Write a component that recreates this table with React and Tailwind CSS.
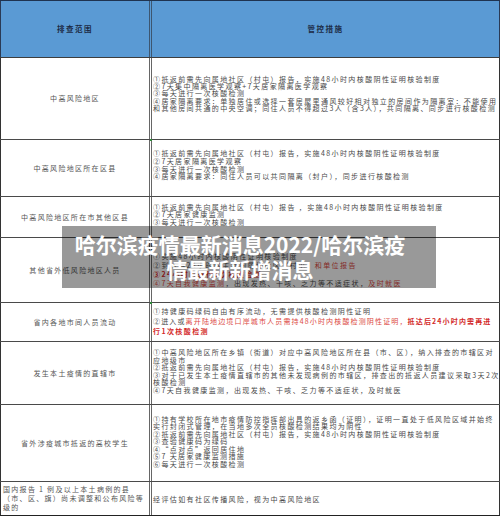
import React from "react";

const R = ({ children, b }) => (
  <span className={b ? "text-[#d32a2a] font-bold" : "text-[#dc4a44]"}>{children}</span>
);

function Row({ h, left, lines, lh = "leading-[7.4px]", pad = "", last = false, leftAlign = false, leftLh = "leading-[8.7px]" }) {
  return (
    <div className={`flex ${h} ${last ? "border-b border-[#222]" : "border-b border-[#4a4a4a]"}`}>
      <div
        className={`w-[152px] shrink-0 flex items-center border-l border-r-[3px] border-r-[#666] border-double border-l-[#333] ${
          leftAlign ? `justify-start pl-[2px] ${leftLh}` : "justify-center"
        } text-[7px] tracking-[1.3px] text-[#555]`}
      >
        <div className={leftAlign ? "" : "text-center whitespace-nowrap"}>{left}</div>
      </div>
      <div className={`flex-1 flex items-center border-r border-[#333] pl-[1px] overflow-hidden ${pad}`}>
        <div className={`text-[7px] tracking-[1.4px] text-[#4a4a4a] ${lh}`}>
          {lines.map((l, i) => (
            <div key={i} className="whitespace-nowrap">
              {l}
            </div>
          ))}
        </div>
      </div>
    </div>
  );
}

export default function App() {
  return (
    <div className="relative w-[500px] h-[516px] bg-white overflow-hidden font-['Noto_Sans_CJK_SC',sans-serif]">
      {/* header */}
      <div className="flex h-[58px] border-t border-[#1f3350] border-b border-b-[#3d3d3d] bg-[#5a9ad4]">
        <div className="w-[152px] shrink-0 flex items-center justify-center border-l border-l-[#2a3a55] border-r-[3px] border-double border-r-[#3d5670] text-[7.5px] tracking-[1.5px] font-bold text-[#1c2a44]">
          排查范围
        </div>
        <div className="flex-1 flex items-center justify-center border-r border-[#2a3a55] text-[7.5px] tracking-[1.5px] font-bold text-[#1c2a44]">
          管控措施
        </div>
      </div>

      <Row
        h="h-[82px]"
        pad="pb-[9px]"
        left="中高风险地区"
        lh="leading-[7.3px]"
        lines={[
          "①抵返前需先向属地社区（村屯）报告，实施48小时内核酸阴性证明核验制度",
          "②7天集中隔离医学观察+7天居家隔离医学观察",
          "③每天进行一次核酸检测",
          "④居家隔离要求：单独居住或选择一套房屋里通风较好相对独立的房间作为隔离室：不能使用",
          "和其他房间共通的中央空调；同住人员不得超过3人（含3人），共同隔离、同步进行核酸检测",
        ]}
      />
      <Row
        h="h-[57px]"
        pad="pb-[5px]"
        left="中高风险地区所在区县"
        lh="leading-[7.6px]"
        lines={[
          "①抵返前需先向属地社区（村屯）报告，实施48小时内核酸阴性证明核验制度",
          "②7天居家隔离医学观察",
          "③每天进行一次核酸检测",
          "④居家隔离要求：同住人员可以共同隔离（封户），同步进行核酸检测",
        ]}
      />
      <Row
        h="h-[41px]"
        pad="pb-[4px]"
        left="中高风险地区所在市其他区县"
        lh="leading-[7.3px]"
        lines={[
          "①抵返前需先向属地社区（村屯）报告 ，实施48小时内核酸阴性证明核验制度",
          "②7天居家健康监测",
          "③每天进行一次核酸检测",
        ]}
      />
      <Row
        h="h-[65px]"
        left="其他省外低风险地区人员"
        lh="leading-[9.2px]"
        lines={[
          "①实施48小时内核酸阴性证明核验制度",
          <>
            ②到达后24小时内主动向属地社区（村屯）<R>和单位报告</R>
          </>,
          <R b>③24小时内进行1次核酸检测</R>,
          <>
            <R>④7天自我健康监测</R>，出现发热、干咳、乏力等不适症状，<R>及时就医</R>
          </>,
        ]}
      />
      <Row
        h="h-[39px]"
        left="省内各地市间人员流动"
        lh="leading-[9.7px]"
        lines={[
          "①持健康码绿码自由有序流动，无需提供核酸检测阴性证明",
          <span className="tracking-[1.15px]">
            ②进入或<R>离开陆地边境口岸城市人员需持48小时内核酸检测阴性证明，</R>
            <R b>抵达后24小时内需再进</R>
          </span>,
          <R b>行1次核酸检测</R>,
        ]}
      />
      <Row
        h="h-[63px]"
        pad="pb-[3px]"
        left="发生本土疫情的直辖市"
        lh="leading-[7.5px]"
        lines={[
          "①中高风险地区所在乡镇（街道）对应中高风险地区所在县（市、区），纳入排查的市辖区对",
          "应地级市",
          "②抵返前需先向属地社区（村屯）报告，实施48小时内核酸阴性证明核验制度",
          "③对于已发生本土疫情直辖市的其他未发现病例的市辖区，排查出的抵返人员建议采取3天2次",
          "核酸检测",
          "④7天自我健康监测，出现发热、干咳、乏力等不适症状，及时就医",
        ]}
      />
      <Row
        h="h-[77px]"
        pad="pb-[2px]"
        left="省外涉疫城市抵返的高校学生"
        lh="leading-[7.5px]"
        lines={[
          "①持有学校所在地市疫情防控指挥部出具的返乡函（证明），证明一直处于低风险区域并始终",
          "实行封闭式管理，在当地多次全员核酸检测结果均为阴性",
          "②抵返前需先向属地社区（村屯）报告，实施48小时内核酸阴性证明核验制度",
          "③查验健康码为绿码",
          "④“点对点”返回居住地",
          "⑤7 天居家健康监测措施",
          "⑥每天进行一次核酸检测",
        ]}
      />
      <Row
        h="h-[34px]"
        last
        leftAlign
        left={
          <>
            <div className="whitespace-nowrap">国内报告 1 例及以上本土病例的县</div>
            <div className="whitespace-nowrap">（市、区、旗）尚未调整和公布风险等</div>
            <div className="whitespace-nowrap">级的</div>
          </>
        }
        lh="leading-[8px]"
        lines={["经评估如有社区传播风险，视为中高风险地区"]}
      />

      {/* selection marks */}
      <div className="absolute left-[150px] top-[139px] w-[2px] h-[2px] bg-[#2f8a3a]" />
      <div className="absolute left-[150px] top-[302px] w-[2px] h-[2px] bg-[#2f8a3a]" />

      {/* title overlay */}
      <div className="absolute left-[62px] top-[226px] w-[374px] h-[62px] bg-black/40 pl-[10px] pr-[28px] pt-[6px] text-center text-white font-bold text-[21px] leading-[25px]">
        <div className="whitespace-nowrap">哈尔滨疫情最新消息2022/哈尔滨疫</div>
        <div className="whitespace-nowrap">情最新新增消息</div>
      </div>
    </div>
  );
}
